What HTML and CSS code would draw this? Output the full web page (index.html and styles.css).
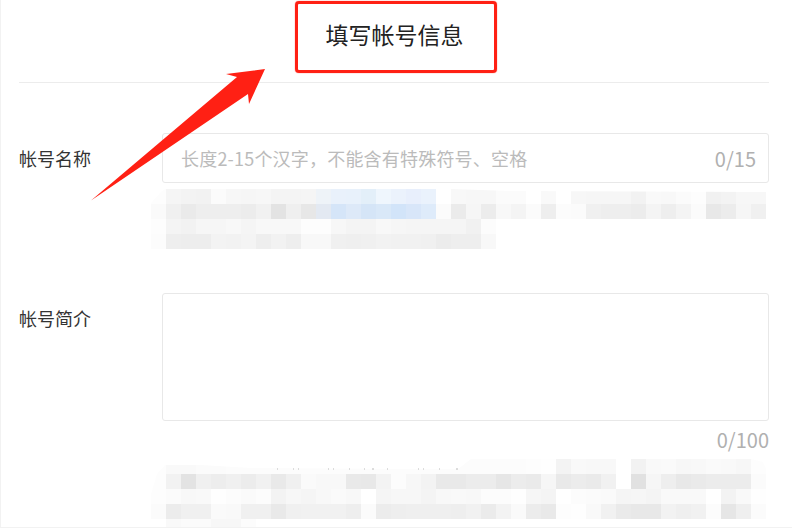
FILE: index.html
```html
<!DOCTYPE html>
<html lang="zh-CN">
<head>
    <meta charset="UTF-8">
    <meta name="viewport" content="width=device-width, initial-scale=1.0">
    <title>填写帐号信息</title>
    <link rel="stylesheet" href="styles.css">
</head>
<body>
    <div class="page">
        <h2 class="title">填写帐号信息</h2>

        <div class="form-row name-row">
            <label class="label">帐号名称</label>
            <div class="field">
                <div class="input-box">
                    <input class="input" type="text" placeholder="长度2-15个汉字，不能含有特殊符号、空格">
                    <span class="count">0/15</span>
                </div>
                <div class="mosaic mosaic-name" id="mosaicName"></div>
            </div>
        </div>

        <div class="form-row intro-row">
            <label class="label">帐号简介</label>
            <div class="field">
                <textarea class="textarea"></textarea>
                <div class="count count-below">0/100</div>
                <div class="mosaic mosaic-intro" id="mosaicIntro"></div>
            </div>
        </div>

        <!-- Annotations drawn over the form -->
        <div class="mark-box"></div>
        <svg class="mark-arrow" viewBox="0 0 792 528" xmlns="http://www.w3.org/2000/svg">
            <polygon points="265,69 226,74 237,77 91,200.5 248,94 249,104" fill="#ff2014"/>
            <!-- bits of hint text left above the blur -->
            <path d="M277 469h1M293 469h1M298 469h1M328 469h1M333 469h1M349 469h1M364 469h1M372 469h2M387 469h1M418 469h1M423 469h1M439 469h1M457 468v2" stroke="#bbb" fill="none"/>
        </svg>
    </div>

    <script src="script.js"></script>
</body>
</html>
```

FILE: styles.css
```css
* {
    box-sizing: border-box;
}
body {
    margin: 0;
    background: white;
    color: #333;
    font-family: "Noto Sans CJK SC", "Liberation Sans", sans-serif;
}
.page {
    position: relative;
    width: 792px;
    height: 528px;
    padding: 0 23px 0 19px;
    overflow: hidden;
    border-left: 1px solid #f2f2f2;
    border-bottom: 1px solid #f2f2f2;
}
.title {
    height: 83px;
    margin: 0 0 0 -1px;
    padding: 17px 0 0 1px;
    border-bottom: 1px solid #ececec;
    color: #222;
    font-size: 23px;
    font-weight: 400;
    line-height: 34px;
    text-align: center;
}
.form-row {
    display: flex;
}
.name-row {
    margin: 50px 0 0 -1px;
}
.intro-row {
    margin: 44px 0 0 -1px;
}
.label {
    width: 143px;
    flex-shrink: 0;
    font-size: 18px;
    line-height: 50px;
}
.field {
    width: 607px;
}
.input-box {
    display: flex;
    align-items: center;
    height: 50px;
    padding: 0 12px 0 18px;
    border: 1px solid #e8e8e8;
    border-radius: 3px;
}
.input {
    flex: 1;
    min-width: 0;
    border: none;
    outline: none;
    padding: 0;
    font-family: inherit;
    font-size: 18px;
    letter-spacing: 0.2px;
}
.input::placeholder {
    color: #bbb;
}
.count {
    color: #b0b0b0;
    font-size: 20px;
}
.textarea {
    display: block;
    width: 100%;
    height: 128px;
    border: 1px solid #e8e8e8;
    border-radius: 3px;
    outline: none;
    resize: none;
}
.count-below {
    height: 38px;
    padding-top: 6px;
    line-height: 26px;
    text-align: right;
}
.mosaic {
    display: grid;
    grid-template-columns: repeat(41, 15px);
    grid-auto-rows: 15px;
    width: 615px;
    margin-left: -11px;
}
.mosaic-name {
    margin-top: 6px;
    clip-path: polygon(0 14px, 10px 3px, 14px 0, 300px 0, 360px 2px, 615px 3px, 615px 60px, 0 60px);
}
.mosaic-intro {
    margin-top: 0;
    clip-path: polygon(6px 15px, 14px 6px, 50px 6px, 100px 9px, 250px 10px, 307px 10px, 320px 0, 600px 0, 612px 3px, 615px 10px, 615px 60px, 105px 60px, 105px 68px, 15px 68px, 15px 60px, 0 60px, 0 35px);
}
.mark-box {
    position: absolute;
    left: 294px;
    top: 1px;
    width: 202px;
    height: 72px;
    border: 3px solid #ff2014;
    border-radius: 4px;
    box-shadow: 0 0 1px #ff2014;
}
.mark-arrow {
    position: absolute;
    left: -1px;
    top: 0;
    width: 792px;
    height: 528px;
}
```

FILE: script.js
```js
// Blurred hint text: each row is a list of grey levels or full colours, one per 15px cell
var nameCells = [
    'fd f5 f3 f2 fb f7 f6 f7 f4 f4 f5 eef3f8 e9f1fb e8f1fb e3eff9 eff6fd ebf2fc e8effc eaf2fc ff f8 f7 f7 fb fb ff f9 ff f7 f6 f6 f6 f2 f9 f8 fb fd f1 f3 f7 f7',
    'fa f0 ea ee ee ee ec f1 e3 ef e7 e3e9f2 d5e5f8 dde9f8 d5e5f7 d9e8f8 d2e4f9 d8e6f9 deebfa fb eb f6 ec f8 f4 fb ee fc fb f0 ee ee ec f4 ee f4 fb e8 ec f6 f0',
    'fd f4 f2 f6 f6 f8 f5 f8 f8 f8 fd fd f7 f4 f4 f8 f6 f5 f5 f5 f5 f1 fc',
    'fc ee ed ed f3 f2 f4 ee f2 ee f8 f8 f0 ef f0 f2 f1 f1 f0 ec ee ee f8'
];
var introCells = [
    'fd f9 f9 fb fb fc fc fc fc fc fc fc fc fc fc fc fc fc fc fc fc fc fc fc fc fd fe f3 f9 f8 f8 ff f2 f9 fa f7 f8 fa f9 f7 fd',
    'fd f2 e3 f0 ed f0 ec f1 e9 f0 fa f8 f8 e9 e8 f3 fc f7 f3 e9 e9 ec ec e6 ec ea f6 e9 ec ea f1 ff e1 f6 ee e8 ea ec ec ec fb',
    'fd fb f8 f9 fe fc fa fc f3 f7 f5 f8 fa f8 ff f5 f7 f7 f4 f8 f9 f8 fc fc fe f6 f4 ff fc fb fa f5 f6 f4 f9 f9 f9 ff f3 f9 fe',
    'fb ec f0 f0 fa f9 f0 f0 e9 f0 f1 f1 f1 ee fb ec ee ef ef ef ee f1 eb f3 fa ec e9 fd fe f9 f1 ea e8 e8 f2 ef f1 fc e6 ef fb',
    'ff f9 fb fb f7 f7 fc'
];

function fillMosaic(id, rows) {
    var box = document.getElementById(id);
    rows.forEach(function(row) {
        var cells = row.split(' ');
        for (var i = 0; i < 41; i++) {
            var cell = document.createElement('div');
            if (cells[i]) {
                var c = cells[i];
                cell.style.background = '#' + (c.length === 2 ? c + c + c : c);
            }
            box.appendChild(cell);
        }
    });
}

fillMosaic('mosaicName', nameCells);
fillMosaic('mosaicIntro', introCells);
```
